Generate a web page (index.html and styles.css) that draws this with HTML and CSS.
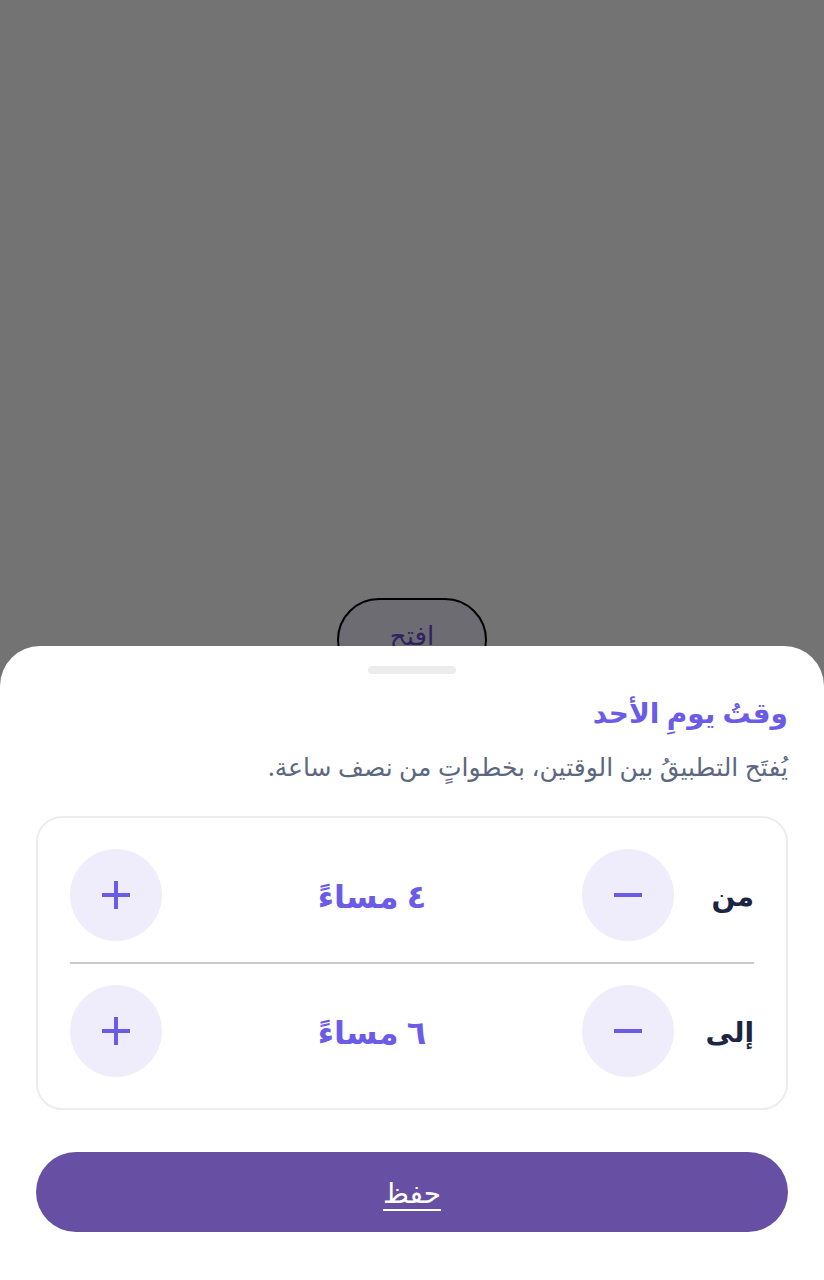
FILE: index.html
```html
<!DOCTYPE html>
<html lang="ar" dir="rtl">
<head>
<meta charset="utf-8">
<link rel="stylesheet" href="styles.css">
</head>
<body>
<div class="screen">
  <div class="backdrop">
    <button class="open-btn">افتح</button>
  </div>
  <div class="sheet">
    <div class="handle"></div>
    <h1 class="title">وقتُ يومِ الأحد</h1>
    <p class="subtitle">يُفتَح التطبيقُ بين الوقتين، بخطواتٍ من نصف ساعة.</p>
    <div class="card">
      <div class="row">
        <span class="label">من</span>
        <button class="circle" aria-label="minus"><svg width="30" height="30" viewBox="0 0 30 30"><rect x="1" y="13" width="28" height="4" fill="#6b5ce7"/></svg></button>
        <span class="value">٤ مساءً</span>
        <button class="circle" aria-label="plus"><svg width="30" height="30" viewBox="0 0 30 30"><rect x="1" y="13" width="28" height="4" fill="#6b5ce7"/><rect x="13" y="1" width="4" height="28" fill="#6b5ce7"/></svg></button>
      </div>
      <div class="divider"></div>
      <div class="row">
        <span class="label">إلى</span>
        <button class="circle" aria-label="minus"><svg width="30" height="30" viewBox="0 0 30 30"><rect x="1" y="13" width="28" height="4" fill="#6b5ce7"/></svg></button>
        <span class="value">٦ مساءً</span>
        <button class="circle" aria-label="plus"><svg width="30" height="30" viewBox="0 0 30 30"><rect x="1" y="13" width="28" height="4" fill="#6b5ce7"/><rect x="13" y="1" width="4" height="28" fill="#6b5ce7"/></svg></button>
      </div>
    </div>
    <button class="save">حفظ</button>
  </div>
</div>
</body>
</html>
```
FILE: styles.css
```css
html, body {
  margin: 0;
  padding: 0;
}
body {
  width: 824px;
  height: 1280px;
  overflow: hidden;
  background: #737373;
  font-family: "Noto Sans", "DejaVu Sans", sans-serif;
}
.screen {
  position: relative;
  width: 824px;
  height: 1280px;
  display: flex;
  flex-direction: column;
}
.backdrop {
  flex: 1;
  display: flex;
  justify-content: center;
  align-items: flex-end;
  min-height: 0;
}
.open-btn {
  width: 150px;
  height: 84px;
  margin-bottom: -36px;
  border: 2px solid #000;
  border-radius: 42px;
  background: #6e6c73;
  color: #2e2360;
  font-family: inherit;
  font-size: 26px;
  padding: 0 0 10px;
  position: relative;
  z-index: 0;
}
.sheet {
  position: relative;
  z-index: 1;
  height: 634px;
  box-sizing: border-box;
  background: #fff;
  border-radius: 40px 40px 0 0;
  padding: 20px 36px 0;
  display: flex;
  flex-direction: column;
}
.handle {
  align-self: center;
  width: 88px;
  height: 8px;
  border-radius: 4px;
  background: #ececec;
}
.title {
  margin: 13px 0 0;
  font-size: 28px;
  font-weight: 700;
  color: #6b5ce7;
  line-height: 50px;
}
.subtitle {
  margin: 7px 0 0;
  font-size: 25px;
  color: #5b6880;
  line-height: 44px;
}
.card {
  margin-top: 28px;
  border: 2px solid #ededed;
  border-radius: 26px;
  padding: 31px 32px;
  display: flex;
  flex-direction: column;
  gap: 21px;
}
.row {
  display: flex;
  align-items: center;
  height: 92px;
}
.label {
  width: 56px;
  font-size: 28px;
  font-weight: 700;
  color: #1c2643;
  text-align: right;
}
.circle {
  width: 92px;
  height: 92px;
  border-radius: 50%;
  border: none;
  background: #efedfb;
  padding: 0;
  display: flex;
  align-items: center;
  justify-content: center;
  margin-inline-start: 24px;
}
.value {
  flex: 1;
  text-align: center;
  font-size: 32px;
  font-weight: 700;
  color: #6b5ce7;
}
.row .value + .circle {
  margin-inline-start: 0;
}
.divider {
  height: 2px;
  background: #cbc8cf;
}
.save {
  margin-top: 42px;
  height: 80px;
  border: none;
  border-radius: 40px;
  background: #6750a4;
  color: #fff;
  font-family: inherit;
  font-size: 28px;
  text-decoration: underline;
  text-decoration-thickness: 2px;
  text-underline-offset: 6px;
}
```
